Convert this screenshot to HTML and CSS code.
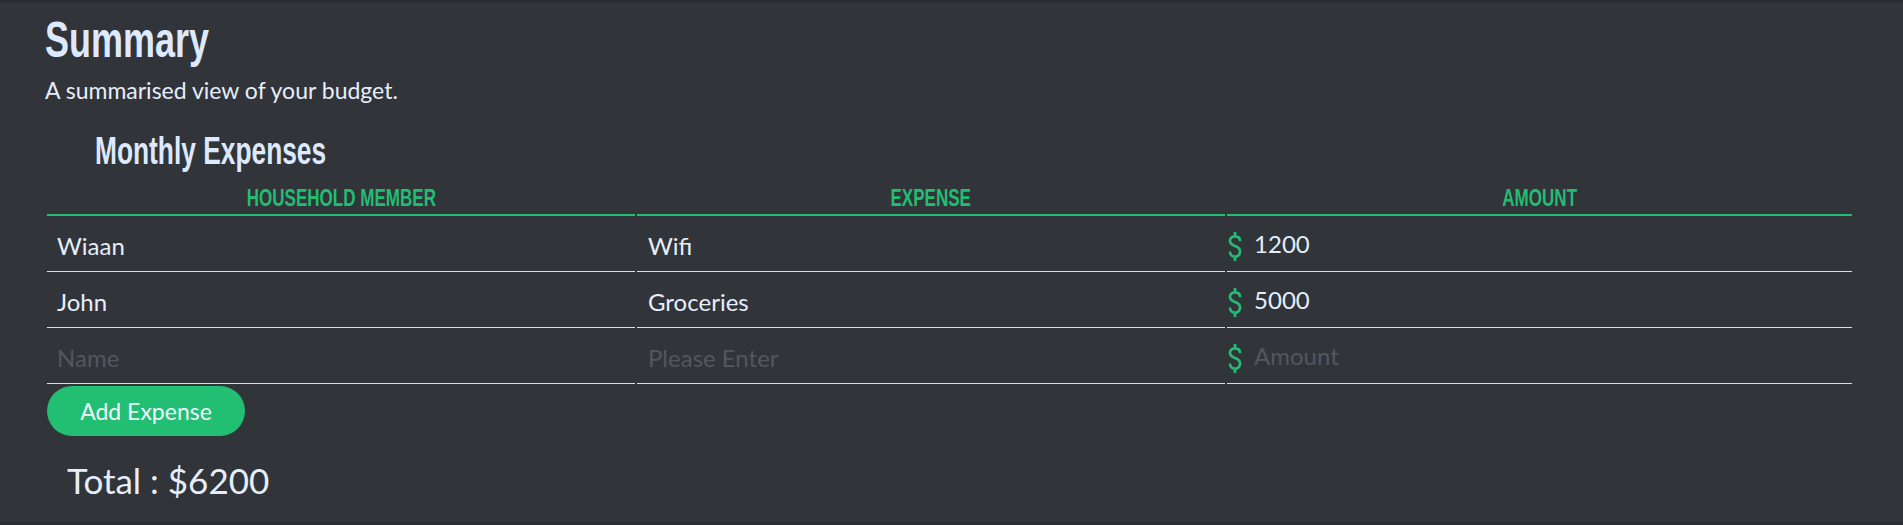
FILE: index.html
```html
<!DOCTYPE html>
<html lang="en">
<head>
<meta charset="utf-8">
<title>Summary</title>
<link rel="stylesheet" href="styles.css">
</head>
<body>
<main class="page">
  <header class="intro">
    <h1 class="title"><span class="narrow">Summary</span></h1>
    <p class="subtitle">A summarised view of your budget.</p>
  </header>
  <section class="expenses">
    <h2 class="section-title"><span class="narrow narrow-68">Monthly Expenses</span></h2>
    <table class="table">
      <colgroup>
        <col>
        <col>
        <col class="col-amount">
      </colgroup>
      <thead>
        <tr>
          <th class="th"><span class="narrow center">Household Member</span></th>
          <th class="th"><span class="narrow center">Expense</span></th>
          <th class="th"><span class="narrow center">Amount</span></th>
        </tr>
      </thead>
      <tbody>
        <tr>
          <td class="td">Wiaan</td>
          <td class="td td-mid">Wifi</td>
          <td class="td amount"><svg class="dollar" viewBox="0 0 16 32" aria-hidden="true"><path d="M8 1v4.5M8 26.5v4.5M13.2 10.5C13.2 7.3 11 5.5 8 5.5S2.8 7.3 2.8 10.2c0 3 2.6 4.2 5.2 5.2s5.2 2.4 5.2 5.6c0 3.3-2.2 5.5-5.2 5.5s-5.2-2.2-5.2-5.3"/></svg>1200</td>
        </tr>
        <tr>
          <td class="td">John</td>
          <td class="td td-mid">Groceries</td>
          <td class="td amount"><svg class="dollar" viewBox="0 0 16 32" aria-hidden="true"><path d="M8 1v4.5M8 26.5v4.5M13.2 10.5C13.2 7.3 11 5.5 8 5.5S2.8 7.3 2.8 10.2c0 3 2.6 4.2 5.2 5.2s5.2 2.4 5.2 5.6c0 3.3-2.2 5.5-5.2 5.5s-5.2-2.2-5.2-5.3"/></svg>5000</td>
        </tr>
        <tr>
          <td class="td placeholder">Name</td>
          <td class="td td-mid placeholder">Please Enter</td>
          <td class="td amount placeholder"><svg class="dollar" viewBox="0 0 16 32" aria-hidden="true"><path d="M8 1v4.5M8 26.5v4.5M13.2 10.5C13.2 7.3 11 5.5 8 5.5S2.8 7.3 2.8 10.2c0 3 2.6 4.2 5.2 5.2s5.2 2.4 5.2 5.6c0 3.3-2.2 5.5-5.2 5.5s-5.2-2.2-5.2-5.3"/></svg>Amount</td>
        </tr>
      </tbody>
    </table>
    <button class="add-btn" type="button">Add Expense</button>
    <p class="total">Total : $6200</p>
  </section>
</main>
</body>
</html>
```

FILE: styles.css
```css
html, body {
  margin: 0;
  padding: 0;
}

body {
  background: #313439;
  font-family: Lato, "Open Sans", sans-serif;
  color: #e6eefb;
  height: 525px;
  box-sizing: border-box;
  border-top: 3px solid #292c30;
  border-bottom: 3px solid #292c30;
  overflow: hidden;
}

.page {
  padding: 12px 49px 0 45px;
}

.narrow {
  display: inline-block;
  transform: scaleX(0.72);
  transform-origin: left center;
  white-space: nowrap;
}

.narrow-68 {
  transform: scaleX(0.675);
}

.narrow.center {
  transform: scaleX(0.71);
  transform-origin: center center;
}

.title,
.section-title,
.th {
  font-family: "Liberation Sans", Arial, sans-serif;
  font-weight: 700;
}

.title {
  margin: 0;
  font-size: 50px;
  line-height: 50px;
  color: #dce9ff;
}

.subtitle {
  margin: 11px 0 0;
  font-size: 23px;
  line-height: 28px;
  color: #e6eefb;
}

.section-title {
  margin: 25px 0 0 50px;
  font-size: 39px;
  line-height: 44px;
  color: #dce9ff;
}

.table {
  border-collapse: separate;
  border-spacing: 2px 0;
  width: 100%;
  table-layout: fixed;
}

.col-amount {
  width: 34.7%;
}

.th {
  font-size: 24px;
  line-height: 24px;
  text-transform: uppercase;
  color: #22bd72;
  border-bottom: 2px solid #22bd72;
  padding: 13px 0 4px;
  vertical-align: bottom;
}

.td {
  border-bottom: 1px solid #d8def0;
  height: 56px;
  box-sizing: border-box;
  padding: 4px 10px 0;
  font-size: 24px;
  line-height: 29px;
  vertical-align: middle;
  white-space: nowrap;
}

.td-mid {
  padding-left: 11px;
}

.amount {
  padding-left: 0;
}

.dollar {
  width: 16px;
  height: 31px;
  vertical-align: -9px;
  margin-right: 11px;
  fill: none;
  stroke: #22bd72;
  stroke-width: 2.8;
  stroke-linecap: butt;
}

.placeholder {
  color: #53575e;
}

.add-btn {
  display: block;
  margin: 2px 0 0 2px;
  width: 198px;
  height: 50px;
  border: none;
  border-radius: 25px;
  background: #22bf73;
  color: #eef6ff;
  font-family: Lato, "Open Sans", sans-serif;
  font-size: 23px;
  padding: 0;
}

.total {
  margin: 22px 0 0 22px;
  font-size: 35px;
  line-height: 44px;
  color: #e6eefb;
}
```
